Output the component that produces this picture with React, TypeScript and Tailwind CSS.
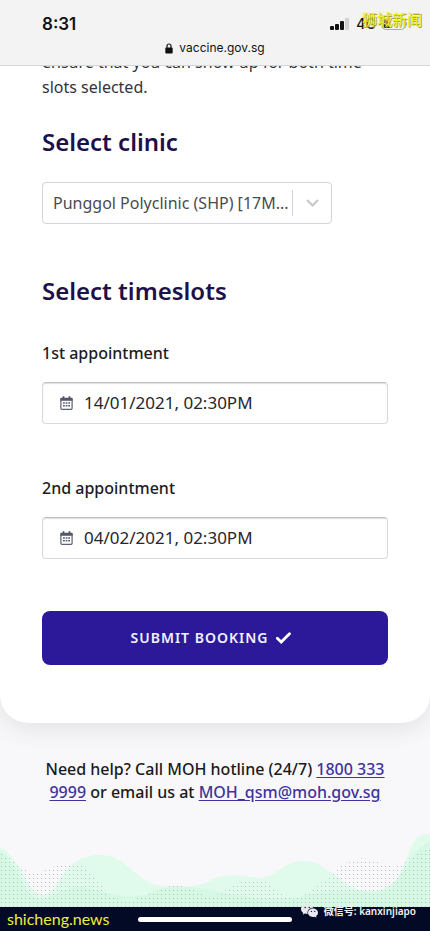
import { ReactNode } from "react";

function LockIcon() {
  return (
    <svg viewBox="0 0 8 11" className="h-[11px] w-2" aria-hidden="true">
      <path d="M2 5V3a2 2 0 0 1 4 0v2" fill="none" stroke="#111" strokeWidth="1.2" />
      <rect x="0.3" y="4.6" width="7.4" height="5.9" rx="1.1" fill="#111" />
    </svg>
  );
}

function SignalIcon() {
  return (
    <svg viewBox="0 0 20 12" className="h-3 w-5" aria-hidden="true">
      <rect x="0" y="8" width="4" height="4" rx="1" fill="#111" />
      <rect x="5" y="6" width="4" height="6" rx="1" fill="#111" />
      <rect x="10" y="3" width="4" height="9" rx="1" fill="#111" />
      <rect x="15" y="0" width="4" height="12" rx="1" fill="#cfcfd1" />
    </svg>
  );
}

function BatteryIcon() {
  return (
    <svg viewBox="0 0 26 12" className="h-3 w-[26px]" aria-hidden="true">
      <rect x="0.5" y="0.5" width="22" height="11" rx="3" fill="none" stroke="#a9a9ac" />
      <rect x="2" y="2" width="6" height="8" rx="1.5" fill="#111" />
      <path d="M24 4c1.600 .4 1.600 3.600 0 4z" fill="#a9a9ac" />
    </svg>
  );
}

function CalendarIcon() {
  return (
    <svg viewBox="0 0 13 14" className="h-[14px] w-[13px] shrink-0" aria-hidden="true">
      <path d="M3.500 0.300v3M9.500 0.300v3" stroke="#4a5062" strokeWidth="1.700" />
      <path d="M0.300 2.800q0-1 1-1h10.400q1 0 1 1v1.900H0.300z" fill="#4a5062" />
      <rect x="0.900" y="3" width="11.200" height="10.300" rx="1" fill="none" stroke="#5b6172" strokeWidth="1.200" />
      <path d="M3 7h7M3 9.800h7" stroke="#5b6172" strokeWidth="1.600" strokeDasharray="1.800 0.800" />
    </svg>
  );
}

function CheckIcon() {
  return (
    <svg viewBox="0 0 15 12" className="h-3 w-[15px]" aria-hidden="true">
      <path d="M1.300 6.300l3.900 3.700L13.500 1.700" fill="none" stroke="#fff" strokeWidth="2.800" strokeLinecap="round" />
    </svg>
  );
}

function WeChatIcon() {
  return (
    <svg viewBox="0 0 17 14" className="h-[14px] w-[17px]" aria-hidden="true">
      <path d="M6.300 0C2.800 0 0 2.200 0 5c0 1.600.9 3 2.300 3.900L1.700 10.700l2.200-1.100c.8.2 1.500.3 2.400.3h.3C5.800 6.300 8.600 3.800 12.300 3.800 11.700 1.600 9.300 0 6.300 0z" fill="#e9e9ee" />
      <path d="M17 8.700c0-2.300-2.300-4.200-5-4.200S7 6.400 7 8.700s2.300 4.200 5 4.200c.6 0 1.200-.1 1.700-.2l1.800 1-.5-1.600c1.200-.8 2-2 2-3.400z" fill="#e9e9ee" />
      <g fill="#1a2138">
        <circle cx="4.200" cy="3.500" r="0.800" />
        <circle cx="8.300" cy="3.500" r="0.800" />
        <circle cx="10.400" cy="7.400" r="0.700" />
        <circle cx="13.700" cy="7.400" r="0.700" />
      </g>
    </svg>
  );
}

function Waves() {
  return (
    <svg viewBox="0 0 430 74" preserveAspectRatio="none" className="block h-[74px] w-full" aria-hidden="true">
      <defs>
        <pattern id="dots" width="4" height="4" patternUnits="userSpaceOnUse">
          <rect x="1" y="1" width="1" height="1" fill="#b3c2bd" />
        </pattern>
      </defs>
      <path d="M0 15C8 16 12 26 20 34C26 48 34 62 44 62C56 60 60 40 74 30C84 23 92 22 100 22C118 22 126 32 138 42C150 52 160 53 172 53C190 54 200 54 215 45C230 40 250 44 262 45C276 42 286 28 303 28C318 28 326 36 338 44C352 58 376 64 390 56C404 44 408 8 420 3C424 1 428 1 430 1V74H0z" fill="#e0faec" />
      <path d="M0 74V18C8 22 14 34 20 44C26 56 30 66 44 66C60 60 70 52 84 54C106 60 130 68 150 60C170 50 190 54 215 58C240 64 270 68 300 64C330 54 350 60 376 58C396 54 404 36 416 18L430 8V74z" fill="#cdf8e0" opacity="0.600" />
      <path d="M0 20C12 24 16 34 30 38C44 42 56 28 74 30C92 32 96 50 110 62C130 74 150 60 166 54C180 48 194 58 210 64C230 60 236 44 256 46C276 48 282 72 300 64C320 56 336 32 350 28C364 22 378 28 392 34C408 32 414 16 430 16V74H0z" fill="url(#dots)" />
    </svg>
  );
}

type FieldProps = { id: string; label: string; value: string };

function AppointmentField({ id, label, value }: FieldProps) {
  return (
    <div>
      <label htmlFor={id} className="block text-base leading-6 font-medium text-[#1c1c24]">
        {label}
      </label>
      <div className="mt-[17px] flex h-[42px] items-center gap-[11px] rounded border border-[#d9d9e0] border-t-[#bfbfc6] bg-white pl-[17px] shadow-[inset_0_1px_1px_#dedee2]">
        <CalendarIcon />
        <input id={id} readOnly defaultValue={value} className="min-w-0 flex-1 bg-transparent text-[17px] leading-6 text-[#26262e] outline-none" />
      </div>
    </div>
  );
}

function HelpLink({ href, children }: { href: string; children: ReactNode }) {
  return (
    <a href={href} className="text-[#40339c] underline underline-offset-2">
      {children}
    </a>
  );
}

export default function App() {
  return (
    <div className="relative flex min-h-screen flex-col bg-[#f8f8fa] font-['Noto_Sans','Noto_Sans_CJK_SC',sans-serif]">
      <header className="relative z-10 flex h-[66px] flex-col border-b border-[#d6d6d9] bg-[#f3f3f4] font-['Inter',sans-serif] text-[#111]">
        <div className="flex items-center justify-between pt-3 pr-[22px] pl-[42px]">
          <span className="text-[17px] leading-6 font-semibold">8:31</span>
          <div className="flex items-center gap-1.5">
            <SignalIcon />
            <span className="text-sm leading-6 font-medium">4G</span>
            <BatteryIcon />
          </div>
        </div>
        <div className="flex items-center justify-center gap-1.5 text-xs leading-6">
          <LockIcon />
          <span>vaccine.gov.sg</span>
        </div>
        <span className="absolute top-[7px] right-2 font-['Noto_Sans_CJK_SC',sans-serif] text-[15px] leading-6 text-[#f2ee1c] [text-shadow:1px_1px_0_#a5a332]">狮城新闻</span>
      </header>

      <main className="-mt-4 rounded-b-[28px] bg-white px-[42px] pb-[58px] shadow-[0_6px_24px_rgba(0,0,0,0.09)]">
        <p className="text-base leading-[25px] text-[#33333b]">
          ensure that you can show up for both time slots selected.
        </p>

        <h2 className="mt-[26px] text-2xl leading-8 font-semibold text-[#1d1148]">
          <label htmlFor="clinic">Select clinic</label>
        </h2>
        <div className="relative mt-6 mr-14">
          <select id="clinic" className="block h-[42px] w-full appearance-none rounded border border-[#d3d3db] bg-white pr-10 pl-2.5 text-base text-[#4a4a50] outline-none">
            <option>Punggol Polyclinic (SHP) [17M...</option>
          </select>
          <div className="pointer-events-none absolute inset-y-2 right-0 flex w-10 items-center justify-center border-l border-[#d3d3db]">
            <svg viewBox="0 0 13 8" className="h-2 w-[13px]" aria-hidden="true">
              <path d="M1 1l5.500 5.500L12 1" fill="none" stroke="#c6c6cc" strokeWidth="2" />
            </svg>
          </div>
        </div>

        <h2 className="mt-[51px] mb-[34px] text-2xl leading-8 font-semibold text-[#1d1148]">Select timeslots</h2>
        <div className="flex flex-col gap-[52px]">
          <AppointmentField id="first" label="1st appointment" value="14/01/2021, 02:30PM" />
          <AppointmentField id="second" label="2nd appointment" value="04/02/2021, 02:30PM" />
          <button type="button" className="flex h-[54px] items-center justify-center gap-2 rounded-lg bg-[#2c1999] pr-2 text-sm font-semibold tracking-[1px] text-[#f3f1ff]">
            SUBMIT BOOKING
            <CheckIcon />
          </button>
        </div>
      </main>

      <p className="mt-[35px] px-9 text-center text-base leading-[23px] font-medium text-[#1a1a20]">
        Need help? Call MOH hotline (24/7) <HelpLink href="tel:18003339999">1800 333 9999</HelpLink> or email us at{" "}
        <HelpLink href="mailto:MOH_qsm@moh.gov.sg">MOH_qsm@moh.gov.sg</HelpLink>
      </p>

      <footer className="mt-auto">
        <Waves />
        <div className="relative flex h-6 items-center justify-center bg-[#020a25]">
          <div className="h-[5px] w-[154px] rounded-full bg-white" />
          <span className="absolute bottom-0 left-[7px] font-['Lato',sans-serif] text-base leading-6 text-[#eeee3c]">shicheng.news</span>
          <div className="absolute right-3.5 bottom-2 flex items-center gap-1.5 text-[10px] leading-6 font-semibold text-[#f1f1f4]">
            <WeChatIcon />
            <span>微信号: kanxinjiapo</span>
          </div>
        </div>
      </footer>
    </div>
  );
}
